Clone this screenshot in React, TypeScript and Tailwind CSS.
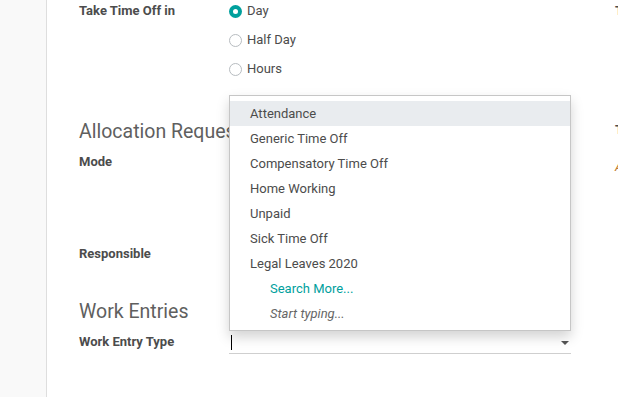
const OPTIONS = [
  "Attendance",
  "Generic Time Off",
  "Compensatory Time Off",
  "Home Working",
  "Unpaid",
  "Sick Time Off",
  "Legal Leaves 2020",
];

const DURATIONS = ["Day", "Half Day", "Hours"];

function Radio({ checked }: { checked: boolean }) {
  return checked ? (
    <span className="flex h-[13px] w-[13px] items-center justify-center rounded-full bg-[#00a09d]">
      <span className="h-[5px] w-[5px] rounded-full bg-white" />
    </span>
  ) : (
    <span className="h-[13px] w-[13px] rounded-full border border-[#b7bcc0] bg-white" />
  );
}

export default function App() {
  return (
    <div
      className="flex h-[397px] w-[618px] overflow-hidden bg-white text-[13px] text-[#4c4c4c]"
      style={{ fontFamily: "Roboto, 'Noto Sans', sans-serif" }}
    >
      {/* side gutter */}
      <div className="w-[47px] shrink-0 border-r border-[#dedede] bg-[#f9f9f9]" />

      {/* sheet */}
      <div className="relative flex flex-1 pl-[32px]">
        <div className="flex w-[492px] shrink-0 flex-col">
          {/* Take Time Off in */}
          <div className="flex">
            <div className="h-[22px] w-[150px] font-bold leading-[22px]">Take Time Off in</div>
            <div className="flex flex-col gap-[7px]">
              {DURATIONS.map((d, i) => (
                <label key={d} className="flex h-[22px] items-center gap-[5px]">
                  <Radio checked={i === 0} />
                  <span>{d}</span>
                </label>
              ))}
            </div>
          </div>

          <h2 className="mt-[39px] h-[26px] text-[19.5px] leading-[26px] text-[#5f5f5f]">
            Allocation Requests
          </h2>
          <div className="mt-[8px] h-[92px] font-bold leading-[18px]">Mode</div>
          <div className="h-[18px] font-bold leading-[18px]">Responsible</div>

          <h2 className="mt-[36px] h-[26px] text-[19.5px] leading-[26px] text-[#5f5f5f]">
            Work Entries
          </h2>
          <div className="mt-[8px] flex">
            <div className="w-[150px] font-bold leading-[18px]">Work Entry Type</div>
            <div className="relative -mt-px flex h-[22px] w-[342px] items-center border-b border-[#cfcfcf]">
              <span className="ml-[2px] h-[15px] w-px bg-black" />
              <span className="absolute right-[2px] top-[9px] h-0 w-0 border-x-[4px] border-t-[4px] border-x-transparent border-t-[#555]" />
            </div>
          </div>
        </div>

        {/* right column, cut off by the viewport */}
        <div className="ml-[44px] flex flex-col whitespace-nowrap font-bold">
          <div className="h-[22px] leading-[22px]">Time</div>
          <div className="mt-[97px] h-[22px] leading-[22px]">To</div>
          <div className="mt-[15px] h-[22px] font-normal italic leading-[22px] text-[#c17d2e]">Archived</div>
        </div>

        {/* dropdown menu */}
        <ul className="absolute left-[182px] top-[95px] w-[342px] border border-[#c6c6c6] bg-white pb-[4px] pt-[5px] shadow-[0_6px_12px_rgba(0,0,0,0.175)]">
          {OPTIONS.map((o, i) => (
            <li
              key={o}
              className={`h-[25px] pl-[20px] leading-[25px] ${i === 0 ? "bg-[#e9ecef]" : ""}`}
            >
              {o}
            </li>
          ))}
          <li className="h-[25px] pl-[40px] leading-[25px] text-[#00a09d]">Search More...</li>
          <li className="h-[25px] pl-[40px] italic leading-[25px] text-[#666]">Start typing...</li>
        </ul>
      </div>
    </div>
  );
}
